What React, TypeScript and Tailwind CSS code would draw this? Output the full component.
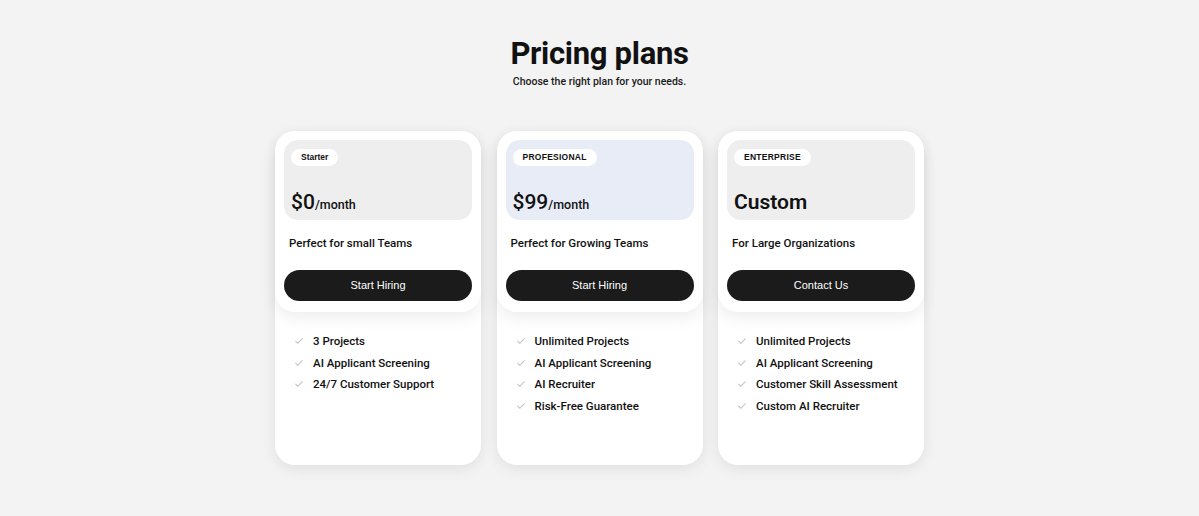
import React from 'react'

const plans = [
  {
    badge: 'Starter',
    badgeClass: 'tracking-normal',
    price: '$0',
    per: '/month',
    box: 'bg-[#eeeeee]',
    desc: 'Perfect for small Teams',
    cta: 'Start Hiring',
    features: ['3 Projects', 'AI Applicant Screening', '24/7 Customer Support'],
  },
  {
    badge: 'PROFESIONAL',
    badgeClass: 'tracking-[0.03em]',
    price: '$99',
    per: '/month',
    box: 'bg-[#e8ecf6]',
    desc: 'Perfect for Growing Teams',
    cta: 'Start Hiring',
    features: ['Unlimited Projects', 'AI Applicant Screening', 'AI Recruiter', 'Risk-Free Guarantee'],
  },
  {
    badge: 'ENTERPRISE',
    badgeClass: 'tracking-[0.03em]',
    price: 'Custom',
    per: '',
    box: 'bg-[#eeeeee]',
    desc: 'For Large Organizations',
    cta: 'Contact Us',
    features: ['Unlimited Projects', 'AI Applicant Screening', 'Customer Skill Assessment', 'Custom AI Recruiter'],
  },
]

function Check() {
  return (
    <svg width="10" height="10" viewBox="0 0 24 24" fill="none" stroke="#c4c4c4" strokeWidth="2.5" strokeLinecap="round" strokeLinejoin="round">
      <path d="M4 12.5l5 5L20 6.5" />
    </svg>
  )
}

export default function App() {
  return (
    <main className="min-h-screen w-full bg-[#f3f3f3] font-['Roboto',sans-serif] text-[#111]">
      <div className="flex flex-col items-center pt-[36px]">
        <h1 className="text-[31px] leading-[36px] font-bold tracking-[-0.01em]">Pricing plans</h1>
        <p className="mt-[3px] text-[10.5px] leading-[14px] font-medium text-[#1a1a1a]">Choose the right plan for your needs.</p>

        <div className="mt-[42px] flex gap-[15.5px]">
          {plans.map((p) => (
            <div key={p.badge} className="w-[206px] h-[334px] rounded-[20px] bg-white shadow-[0_4px_14px_rgba(0,0,0,0.08)] flex flex-col">
              <div className="rounded-[20px] bg-white p-[9px] pb-[11px] shadow-[0_6px_16px_rgba(0,0,0,0.07)]">
                <div className={`${p.box} h-[80px] rounded-[14px] px-[7px] pt-[9px] flex flex-col`}>
                  <span className={`self-start rounded-full bg-white px-[10px] h-[17px] flex items-center text-[8.5px] font-bold font-['Liberation_Sans',Arial,sans-serif] ${p.badgeClass}`}>
                    {p.badge}
                  </span>
                  <div className="mt-auto mb-[5px] flex items-baseline">
                    <span className={p.per ? 'text-[21px] leading-[26px] font-medium' : 'text-[21px] leading-[26px] font-semibold'}>{p.price}</span>
                    {p.per && <span className="text-[12.5px] font-medium">{p.per}</span>}
                  </div>
                </div>
                <p className="mt-[15px] px-[5px] text-[11.5px] leading-[16px] font-medium">{p.desc}</p>
                <button className="mt-[19px] w-full h-[31px] rounded-full bg-[#1b1b1b] text-white text-[11px] font-['Liberation_Sans',Arial,sans-serif]">
                  {p.cta}
                </button>
              </div>
              <ul className="mt-[21px] px-[19px] flex flex-col gap-[5.5px]">
                {p.features.map((f) => (
                  <li key={f} className="flex items-center gap-[9px] text-[11.5px] leading-[16px] font-medium">
                    <Check />
                    <span>{f}</span>
                  </li>
                ))}
              </ul>
            </div>
          ))}
        </div>
      </div>
    </main>
  )
}
